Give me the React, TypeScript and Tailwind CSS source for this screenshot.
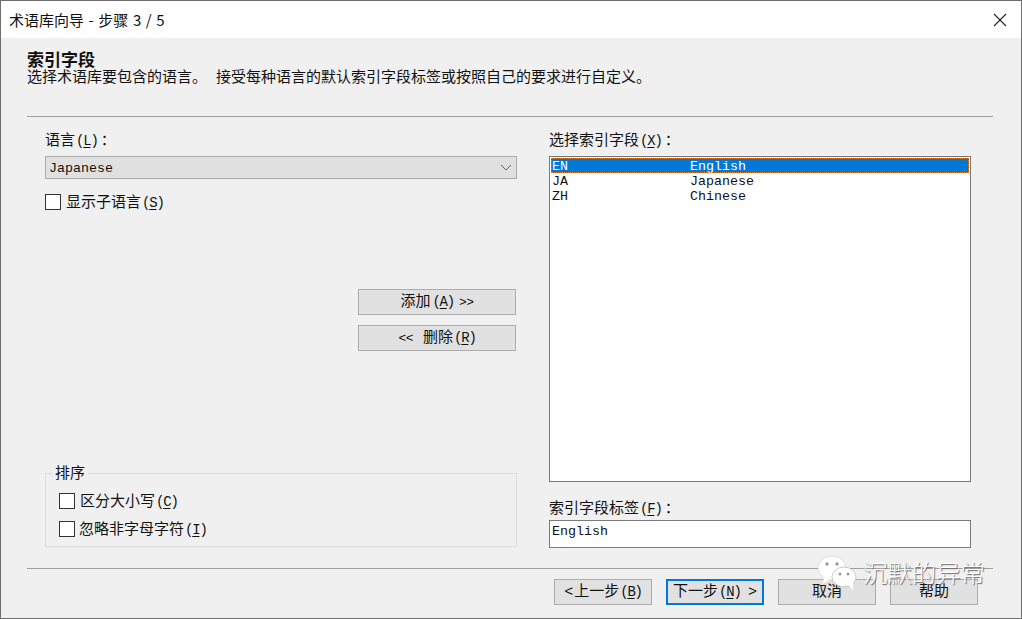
const cjk = { fontFamily: '"Liberation Mono","Noto Sans CJK SC",monospace' };

function U({ c }: { c: string }) {
  return (
    <span className="text-[14px] tracking-[-1.2px] ml-[1px]">
      (<span className="underline underline-offset-2">{c}</span>)
    </span>
  );
}

function Check({ label, k, tight }: { label: string; k: string; tight?: boolean }) {
  return (
    <div className={`flex items-center ${tight ? "gap-[4px]" : "gap-[5px]"} h-[16px]`}>
      <div className="w-[16px] h-[16px] bg-white border border-[#333333] shrink-0" />
      <span className="text-[15px] h-[16px] leading-[18px] whitespace-nowrap text-[#111111]">
        {label}
        <U c={k} />
      </span>
    </div>
  );
}

function Btn({ children, cls, focus }: { children: React.ReactNode; cls: string; focus?: boolean }) {
  return (
    <div
      className={`h-[26px] flex items-center bg-[#e1e1e1] text-[15px] leading-none whitespace-nowrap text-[#111111] ${
        focus ? "border-2 border-[#0078d7]" : "border border-[#adadad]"
      } ${cls}`}
    >
      {children}
    </div>
  );
}

export default function App() {
  return (
    <div
      className="w-[1022px] h-[619px] flex flex-col bg-[#f0f0f0] border border-[#6e6e6e] overflow-hidden relative text-[#111111]"
      style={cjk}
    >
      <div className="h-[37px] bg-white flex items-center justify-between pl-[8px] pr-[13px] shrink-0">
        <span
          className="text-[15px] leading-none whitespace-nowrap [word-spacing:1.2px]"
          style={{ fontFamily: '"Noto Sans CJK SC",sans-serif' }}
        >
          术语库向导 - 步骤 3 / 5
        </span>
        <svg width="14" height="14" viewBox="0 0 14 14" className="mr-[1px]">
          <path d="M1 1 L13 13 M13 1 L1 13" stroke="#222222" strokeWidth="1.1" fill="none" />
        </svg>
      </div>

      <div className="pl-[26px] pr-[28px] pt-[15px] shrink-0">
        <div className="text-[17px] leading-[17px] font-bold whitespace-nowrap">索引字段</div>
        <div className="text-[15px] leading-[16px] whitespace-nowrap mt-[1px]">
          选择术语库要包含的语言。 接受每种语言的默认索引字段标签或按照自己的要求进行自定义。
        </div>
        <div className="h-px bg-[#a0a0a0] mt-[29px]" />
      </div>

      <div className="flex pl-[44px] pt-[15px] h-[446px] shrink-0">
        <div className="w-[472px] flex flex-col">
          <div className="text-[15px] h-[16px] leading-[18px] whitespace-nowrap">
            语言
            <U c="L" />
            <span className="ml-[3px]">：</span>
          </div>
          <div className="mt-[8px] h-[23px] bg-[#e0e0e0] border border-[#adadad] flex items-center justify-between pl-[3px] pr-[4px] text-[13.33px] leading-none">
            <span className="pt-[3px]">Japanese</span>
            <svg width="12" height="7" viewBox="0 0 12 7">
              <path d="M1 1 L6 6 L11 1" stroke="#666666" strokeWidth="1" fill="none" />
            </svg>
          </div>
          <div className="mt-[15px]">
            <Check label="显示子语言" k="S" />
          </div>

          <div className="mt-[79px] ml-[313px] w-[158px] flex flex-col gap-[10px]">
            <Btn cls="justify-center gap-[1px]">
              添加
              <U c="A" />
              <span className="ml-[4px] text-[13px] tracking-[-0.5px]">&gt;&gt;</span>
            </Btn>
            <Btn cls="justify-center gap-[10px]">
              <span className="text-[13px] tracking-[-0.5px]">&lt;&lt;</span>
              <span>
                删除
                <U c="R" />
              </span>
            </Btn>
          </div>

          <div className="relative mt-[122px] h-[74px] border border-[#dcdcdc] pl-[13px] pt-[19px]">
            <span className="absolute left-[6px] top-[-7px] px-[3px] bg-[#f0f0f0] text-[15px] leading-[16px]">排序</span>
            <div className="flex flex-col gap-[12px]">
              <Check label="区分大小写" k="C" />
              <Check label="忽略非字母字符" k="I" tight />
            </div>
          </div>
        </div>

        <div className="ml-[32px] w-[422px] flex flex-col">
          <div className="text-[15px] h-[16px] leading-[18px] whitespace-nowrap">
            选择索引字段
            <U c="X" />
            <span className="ml-[3px]">：</span>
          </div>
          <div className="mt-[8px] h-[326px] bg-white border border-[#7a7a7a] p-px text-[13.33px] leading-[17px]">
            <div className="flex h-[15px] bg-[#0078d7] text-white outline-1 outline-dotted -outline-offset-1 outline-[#f08020] pl-[1px]">
              <span className="w-[138px]">EN</span>
              <span>English</span>
            </div>
            <div className="flex h-[15px] pl-[1px]">
              <span className="w-[138px]">JA</span>
              <span>Japanese</span>
            </div>
            <div className="flex h-[15px] pl-[1px]">
              <span className="w-[138px]">ZH</span>
              <span>Chinese</span>
            </div>
          </div>
          <div className="mt-[18px] text-[15px] h-[16px] leading-[18px] whitespace-nowrap">
            索引字段标签
            <U c="F" />
            <span className="ml-[3px]">：</span>
          </div>
          <div className="mt-[4px] h-[28px] bg-white border border-[#7a7a7a] pl-[2px] flex items-center text-[13.33px] leading-none pb-[5px]">
            English
          </div>
        </div>
      </div>

      <div className="mt-[5px] ml-[26px] mr-[28px] h-px bg-[#a0a0a0] shrink-0" />

      <div className="flex pl-[553px] pt-[10px]">
        <Btn cls="w-[98px] justify-center gap-[1px]">
          <span>&lt;</span>
          <span>
            上一步
            <U c="B" />
          </span>
        </Btn>
        <Btn focus cls="ml-[14px] w-[98px] pl-[5px] pr-[5px] justify-between">
          <span>
            下一步
            <U c="N" />
          </span>
          <span>&gt;</span>
        </Btn>
        <Btn cls="ml-[14px] w-[98px] justify-center">取消</Btn>
        <Btn cls="ml-[14px] w-[88px] justify-center">帮助</Btn>
      </div>

      <div className="absolute left-[816px] top-[553px] flex items-start">
        <svg width="42" height="38" viewBox="0 0 42 38">
          <ellipse cx="15" cy="14" rx="14" ry="12" fill="#ffffff" stroke="#c8c8c8" strokeWidth="0.6" />
          <path d="M7 23 L6 30 L13 25 Z" fill="#ffffff" />
          <circle cx="10" cy="10" r="1.7" fill="#9a9a9a" />
          <circle cx="20" cy="10" r="1.7" fill="#9a9a9a" />
          <ellipse cx="27" cy="23" rx="12" ry="10" fill="#ffffff" stroke="#bdbdbd" strokeWidth="0.8" />
          <path d="M32 31 L36 37 L36 28 Z" fill="#ffffff" />
          <circle cx="23" cy="20" r="1.5" fill="#9a9a9a" />
          <circle cx="31" cy="20" r="1.5" fill="#9a9a9a" />
        </svg>
        <span
          className="ml-[4px] mt-[4px] text-[24.4px] leading-[28px] font-light whitespace-nowrap text-white"
          style={{ fontFamily: '"Noto Sans CJK SC",sans-serif', textShadow: "1px 1px 1px #666666" }}
        >
          沉默的异常
        </span>
      </div>
    </div>
  );
}
